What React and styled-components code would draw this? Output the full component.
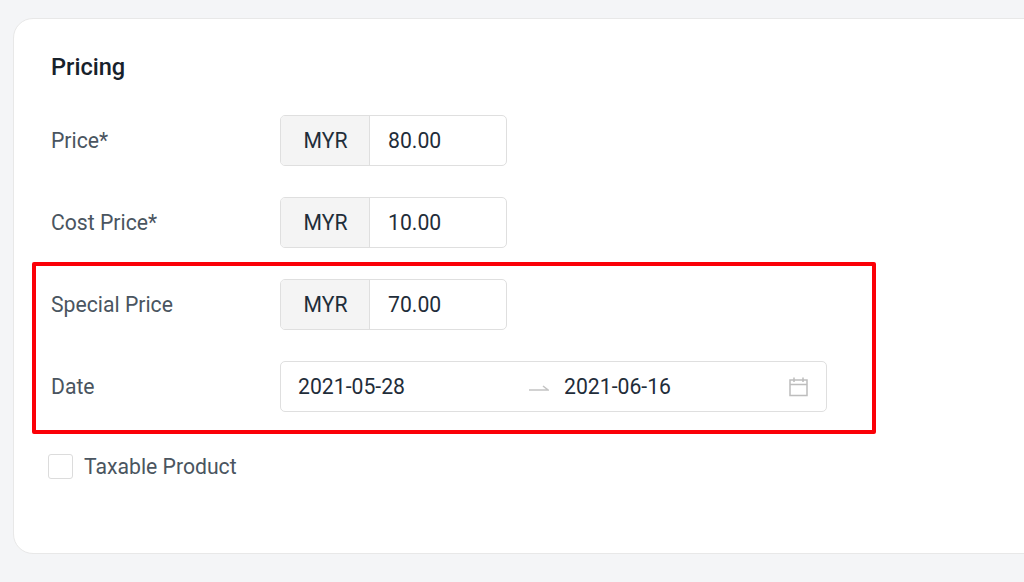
import styled, { createGlobalStyle } from "styled-components";

const GlobalStyle = createGlobalStyle`
    html, body {
        margin: 0;
        height: 582px;
        overflow: hidden;
        background: #f4f5f7;
        font-family: Roboto, "Liberation Sans", sans-serif;
    }
`;

const Page = styled.div`
    width: 1024px;
    height: 582px;
    padding: 18px 0 0 13px;
    box-sizing: border-box;
    overflow: hidden;
`;

const Card = styled.section`
    width: 1100px;
    height: 536px;
    box-sizing: border-box;
    background: #fff;
    border: 1px solid #e8e8e8;
    border-radius: 20px;
    padding: 32px 0 0 37px;
`;

const Title = styled.h2`
    margin: 0 0 32px;
    font-size: 23.6px;
    line-height: 32px;
    font-weight: 500;
    color: #17212b;
`;

const Rows = styled.div`
    display: flex;
    flex-direction: column;
    gap: 31px;
`;

const Highlight = styled.div`
    position: relative;
    display: flex;
    flex-direction: column;
    gap: 31px;
`;

const RedBox = styled.div`
    position: absolute;
    top: -17px;
    left: -19px;
    width: 844px;
    height: 172px;
    box-sizing: border-box;
    border: 4px solid #fb0007;
    border-radius: 2px;
    pointer-events: none;
`;

const Row = styled.div`
    display: flex;
    align-items: center;
    height: 51px;
`;

const Label = styled.label`
    width: 229px;
    font-size: 21.2px;
    color: #4a5560;
`;

const PriceGroup = styled.div`
    display: flex;
    width: 227px;
    height: 51px;
    box-sizing: border-box;
    border: 1px solid #dfdfdf;
    border-radius: 5px;
    overflow: hidden;
    font-size: 21.2px;
    color: #1f2d3a;
`;

const Currency = styled.span`
    display: flex;
    align-items: center;
    justify-content: center;
    width: 87px;
    padding-left: 1px;
    background: #f4f4f4;
    border-right: 1px solid #dfdfdf;
`;

const Amount = styled.span`
    display: flex;
    align-items: center;
    padding-left: 18px;
`;

const DateRange = styled.div`
    display: flex;
    align-items: center;
    width: 547px;
    height: 51px;
    box-sizing: border-box;
    border: 1px solid #dfdfdf;
    border-radius: 5px;
    padding-left: 17px;
    font-size: 21.2px;
    color: #1f2d3a;
`;

const DateValue = styled.span`
    width: ${props => props.$width}px;
`;

const Separator = styled.svg`
    width: 20px;
    height: 12px;
    margin-right: 15px;
`;

const CalendarIcon = styled.svg`
    width: 21px;
    height: 21px;
`;

const CheckRow = styled.div`
    display: flex;
    align-items: center;
    gap: 11px;
    margin: 42px 0 0 -3px;
`;

const Checkbox = styled.span`
    width: 25px;
    height: 25px;
    box-sizing: border-box;
    border: 1px solid #dcdcdc;
    border-radius: 3px;
    background: #fff;
`;

const CheckLabel = styled.span`
    font-size: 21.2px;
    color: #4a5560;
`;

function PriceRow({ label, amount }) {
    return (
        <Row>
            <Label>{label}</Label>
            <PriceGroup>
                <Currency>MYR</Currency>
                <Amount>{amount}</Amount>
            </PriceGroup>
        </Row>
    );
}

export default function App() {
    return (
        <Page>
            <GlobalStyle />
            <Card>
                <Title>Pricing</Title>
                <Rows>
                    <PriceRow label="Price*" amount="80.00" />
                    <PriceRow label="Cost Price*" amount="10.00" />
                    <Highlight>
                        <PriceRow label="Special Price" amount="70.00" />
                        <Row>
                            <Label>Date</Label>
                            <DateRange>
                                <DateValue $width={231}>2021-05-28</DateValue>
                                <Separator viewBox="0 0 20 12" fill="none" stroke="#c4c4c4" strokeWidth="1.5">
                                    <path d="M0 9h19l-5-4" />
                                </Separator>
                                <DateValue $width={224}>2021-06-16</DateValue>
                                <CalendarIcon viewBox="0 0 21 21" fill="none" stroke="#bdbdbd" strokeWidth="1.5">
                                    <path d="M2 4h17v15.500H2zM2 8.500h17M6 1.500V6M15 1.500V6" />
                                </CalendarIcon>
                            </DateRange>
                        </Row>
                        <RedBox />
                    </Highlight>
                </Rows>
                <CheckRow>
                    <Checkbox />
                    <CheckLabel>Taxable Product</CheckLabel>
                </CheckRow>
            </Card>
        </Page>
    );
}
